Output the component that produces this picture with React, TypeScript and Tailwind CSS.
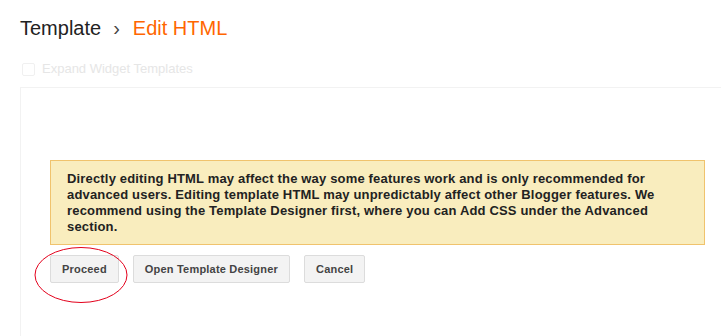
import React from "react";

function GrayButton({ label }: { label: string }) {
  return (
    <button
      type="button"
      className="h-[28px] px-[11px] rounded-[2px] border border-[#dcdcdc] bg-[#f3f3f3] text-[11px] font-bold tracking-[0.2px] text-[#444] leading-none"
    >
      {label}
    </button>
  );
}

export default function App() {
  return (
    <div className="w-[721px] h-[336px] overflow-hidden bg-white font-['Liberation_Sans',Arial,sans-serif]">
      <h1 className="pt-[16px] pl-[20px] flex text-[20px] leading-6 font-normal text-[#222]">
        <span>Template</span>
        <span className="ml-[12px] text-[#444]">›</span>
        <span className="ml-[13px] text-[#ff6600]">Edit HTML</span>
      </h1>

      <label className="mt-[21px] ml-[22px] flex items-center gap-[7px] text-[13px] leading-4 text-[#e6e6e6]">
        <span className="w-[13px] h-[13px] rounded-[2px] border border-[#f0f0f0]" />
        Expand Widget Templates
      </label>

      <div className="mt-[10px] ml-[20px] w-[720px] h-[300px] border border-[#f2f2f2] pt-[72px] pl-[29px]">
        <div className="w-[655px] border border-[#f0c36d] bg-[#f9edbe] px-[16px] pt-[10px] pb-[9px] text-[13px] leading-4 font-bold tracking-[0.17px] text-[#222]">
          Directly editing HTML may affect the way some features work and is only recommended for
          advanced users. Editing template HTML may unpredictably affect other Blogger features. We
          recommend using the Template Designer first, where you can Add CSS under the Advanced
          section.
        </div>

        <div className="relative mt-[10px] flex gap-[14px]">
          <GrayButton label="Proceed" />
          <GrayButton label="Open Template Designer" />
          <GrayButton label="Cancel" />
          <svg
            className="absolute left-[-16px] top-[-8px]"
            width="96"
            height="60"
            viewBox="0 0 96 60"
          >
            <ellipse cx="47" cy="28" rx="46" ry="27.5" fill="none" stroke="#e3001b" strokeWidth="1" />
          </svg>
        </div>
      </div>
    </div>
  );
}
